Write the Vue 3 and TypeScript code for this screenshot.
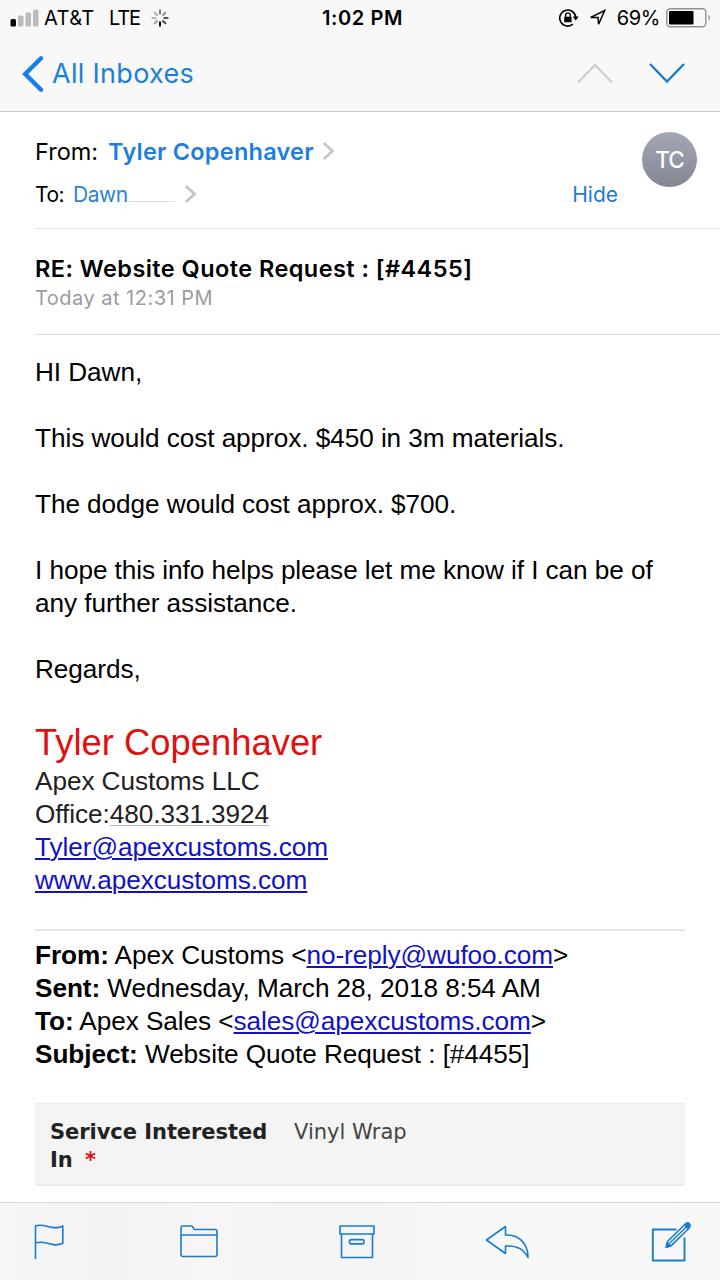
<script setup lang="ts">
interface Line {
  text: string
  cls?: string
}

const paragraphs: Line[] = [
  { text: 'HI Dawn,', cls: 'greeting' },
  { text: 'This would cost approx. $450 in 3m materials.' },
  { text: 'The dodge would cost approx. $700.' },
]

const spokes = [0, 45, 90, 135, 180, 225, 270, 315].map((angle) => ({
  angle,
  shade: ['#777', '#8c8c8c', '#555', '#444', '#000', '#999', '#b5b5b5', '#aaa'][angle / 45],
}))
</script>

<template>
  <div class="screen">
    <header class="top">
      <div class="status">
        <div class="carrier">
          <svg width="29" height="18" viewBox="0 0 29 18">
            <rect x="0.5" y="10" width="5.5" height="7.5" rx="1.5" fill="#000" />
            <rect x="8" y="6.5" width="5.5" height="11" rx="1.5" fill="#bcbcbc" />
            <rect x="15.5" y="3.5" width="5.5" height="14" rx="1.5" fill="#bcbcbc" />
            <rect x="23" y="0.5" width="5.5" height="17" rx="1.5" fill="#bcbcbc" />
          </svg>
          <span class="att">AT&amp;T</span>
          <span class="lte">LTE</span>
          <svg class="spinner" width="18" height="18" viewBox="-9 -9 18 18">
            <line
              v-for="s in spokes"
              :key="s.angle"
              x1="0"
              y1="-4.2"
              x2="0"
              y2="-7.7"
              :stroke="s.shade"
              stroke-width="1.9"
              stroke-linecap="round"
              :transform="`rotate(${s.angle})`"
            />
          </svg>
        </div>
        <div class="clock">1:02 PM</div>
        <div class="power">
          <svg class="lock" width="20" height="18" viewBox="0 0 20 18">
            <path d="M13.9 15.2A8 8 0 1 1 16.7 8" fill="none" stroke="#000" stroke-width="1.6" />
            <path d="M13.7 7.5h6l-3 4z" />
            <rect x="5.2" y="7.7" width="7.4" height="5.6" rx="0.6" />
            <path d="M6.6 8V6.2a2.3 2.3 0 0 1 4.6 0V8" fill="none" stroke="#000" stroke-width="1.4" />
          </svg>
          <svg class="locate" width="18" height="18" viewBox="0 0 18 18">
            <path d="M1.7 8.4L15.7 1.5 9.6 15.3 9 8.5z" fill="none" stroke="#000" stroke-width="1.5" />
          </svg>
          <span class="percent">69%</span>
          <svg class="battery" width="46" height="20" viewBox="0 0 46 20">
            <rect x="0.8" y="0.8" width="39" height="18" rx="3.5" fill="none" stroke="#929292" stroke-width="1.4" />
            <rect x="3" y="3" width="24.5" height="13.5" rx="1" />
            <path d="M42.5 6.5q3 3.3 0 6.6z" fill="#929292" />
          </svg>
        </div>
      </div>
      <nav class="navbar">
        <svg class="back" width="22" height="38" viewBox="0 0 22 38">
          <path d="M19 3.3L3.2 19 19 34.7" fill="none" stroke="#167fe8" stroke-width="4.4" stroke-linecap="round" stroke-linejoin="miter" />
        </svg>
        <span class="inboxes">All Inboxes</span>
        <svg class="up" width="38" height="24" viewBox="0 0 38 24">
          <path d="M2 20.5L19 3l17 17.5" fill="none" stroke="#cdcdcd" stroke-width="2.1" />
        </svg>
        <svg class="down" width="38" height="24" viewBox="0 0 38 24">
          <path d="M2 2L19 19.500 36 2" fill="none" stroke="#187bd3" stroke-width="2.3" />
        </svg>
      </nav>
    </header>

    <section class="people">
      <div class="fields">
        <div class="from">
          <span class="from-label">From:</span>
          <span class="from-name">Tyler Copenhaver</span>
          <svg class="chev" width="13" height="20" viewBox="0 0 13 20">
            <path d="M1.700 2L10.500 10 1.700 18" fill="none" stroke="#c6c6c8" stroke-width="2.800" />
          </svg>
        </div>
        <div class="to">
          <span class="to-label">To:</span>
          <span class="to-name">Dawn</span>
          <span class="redacted"></span>
          <svg class="chev" width="13" height="20" viewBox="0 0 13 20">
            <path d="M1.700 2L10.500 10 1.700 18" fill="none" stroke="#c6c6c8" stroke-width="2.800" />
          </svg>
          <span class="hide">Hide</span>
        </div>
      </div>
      <div class="avatar"><span>TC</span></div>
    </section>

    <section class="subject">
      <div class="title">RE: Website Quote Request : [#4455]</div>
      <div class="date">Today at 12:31 PM</div>
    </section>

    <main class="body">
      <p v-for="p in paragraphs" :key="p.text"><span :class="p.cls">{{ p.text }}</span></p>
      <p><span class="hope">I hope this info helps please let me know if I can be of</span><br /><span>any further assistance.</span></p>
      <p>Regards,</p>
      <div class="signature">
        <div class="sig-name">Tyler Copenhaver</div>
        <div class="dark">Apex Customs LLC</div>
        <div class="dark">Office:<span class="phone">480.331.3924</span></div>
        <div><a class="mail">Tyler@apexcustoms.com</a></div>
        <div><a class="web">www.apexcustoms.com</a></div>
      </div>
      <div class="quoted">
        <div class="q1"><b>From:</b> Apex Customs &lt;<a>no-reply@wufoo.com</a>&gt;</div>
        <div class="q2"><b>Sent:</b> Wednesday, March 28, 2018 8:54 AM</div>
        <div class="q3"><b>To:</b> Apex Sales &lt;<a>sales@apexcustoms.com</a>&gt;</div>
        <div class="q4"><b>Subject:</b> Website Quote Request : [#4455]</div>
      </div>
      <div class="form-row">
        <div class="question"><span class="service">Serivce Interested</span><br />In <i>*</i></div>
        <div class="answer">Vinyl Wrap</div>
      </div>
    </main>

    <footer class="toolbar">
      <svg class="flag" width="32" height="36" viewBox="0 0 32 36">
        <path d="M1.500 35V2C11-1.500 18 7.500 28.800 2v17.200C18 24.500 12 15.500 1.500 19" />
      </svg>
      <svg class="folder" width="38" height="34" viewBox="0 0 38 34">
        <path d="M1 29.500V3q0-2 2-2h8.500q1 0 1.500 1.200l.8 1.600q.4.700 1.200.7h20q2 0 2 2v23q0 2-2 2H3q-2 0-2-2zM1 10h36" />
      </svg>
      <svg class="archive" width="36" height="34" viewBox="0 0 36 34">
        <path d="M1 1h34v8H1zM2.500 9h31v23.500h-31z" />
        <rect x="10.500" y="14.600" width="14.500" height="4.300" rx="2" />
      </svg>
      <svg class="reply" width="46" height="36" viewBox="0 0 46 36">
        <path d="M1.500 16L20.500 2.500V11C33 10.500 43 18.500 43 33.500 38.500 25 32.500 21.500 20.500 22v7.500z" />
      </svg>
      <svg class="compose" width="42" height="42" viewBox="0 0 42 42">
        <path d="M26.500 8.500H2.800v31h31.700V16.500" stroke-width="1.900" />
        <path d="M17.500 20.500L35 3.300 39 7.300 21.500 24.400 16.300 26.300z" stroke-width="1.600" />
        <path d="M19.400 22.500L37 5.300" stroke-width="1.400" />
        <path d="M34.500 4l1.800-1.700q1.500-1 3 .4 1.600 1.700.6 3L38 7.500z" fill="#187bd3" />
        <path d="M16.300 26.300l1.100-4.500 3.300 3z" fill="#187bd3" />
      </svg>
    </footer>
  </div>
</template>

<style>
html,
body {
  margin: 0;
  background: #fff;
}
</style>

<style scoped>
* {
  box-sizing: border-box;
}
.screen {
  width: 720px;
  height: 1280px;
  overflow: hidden;
  display: flex;
  flex-direction: column;
  background: #fff;
  color: #000;
  font-family: Inter, sans-serif;
  white-space: nowrap;
}
svg {
  flex: none;
  display: block;
}
.top {
  height: 112px;
  flex: none;
  background: #f8f8f8;
  border-bottom: 1px solid #c9c9c9;
}
.status {
  height: 36px;
  display: grid;
  grid-template-columns: 1fr auto 1fr;
  align-items: center;
  line-height: 36px;
  font-size: 20px;
}
.carrier {
  display: flex;
  align-items: center;
  padding-left: 10px;
}
.att {
  width: 52px;
  margin-left: 5px;
  letter-spacing: 0.4px;
}
.lte {
  width: 30px;
  margin-left: 13px;
  letter-spacing: -1.1px;
}
.spinner {
  margin-left: 12px;
}
.clock {
  font-weight: 600;
  letter-spacing: 0.6px;
  padding-left: 5px;
}
.power {
  display: flex;
  align-items: center;
  justify-content: flex-end;
  padding-right: 8px;
}
.locate {
  margin-left: 10px;
  margin-right: 10px;
}
.percent {
  letter-spacing: -0.4px;
}
.battery {
  margin-left: 6px;
}
.navbar {
  height: 75px;
  display: flex;
  align-items: center;
  padding-left: 22px;
  padding-right: 34px;
}
.inboxes {
  flex: 1;
  margin-left: 8px;
  color: #1c7fd8;
  font-size: 27px;
  letter-spacing: 0.3px;
}
.down {
  margin-left: 34px;
}
.people {
  height: 117px;
  flex: none;
  margin-left: 35px;
  border-bottom: 1px solid #e2e2e4;
  display: flex;
}
.fields {
  width: 583px;
  padding-top: 21px;
}
.from {
  height: 36px;
  display: flex;
  align-items: center;
  font-size: 23.5px;
}
.from-name {
  margin-left: 10px;
  color: #1c7fe0;
  font-weight: 600;
  letter-spacing: 0.24px;
}
.from .chev {
  margin-left: 8px;
}
.to {
  margin-top: 8px;
  height: 34px;
  display: flex;
  align-items: center;
  font-size: 21px;
}
.to-label {
  letter-spacing: -0.5px;
}
.to-name {
  margin-left: 9px;
  color: #2d83d3;
  letter-spacing: -0.5px;
}
.redacted {
  width: 47px;
  height: 15px;
  border-bottom: 1px solid #e0e0e0;
}
.to .chev {
  margin-left: 9px;
}
.hide {
  margin-left: auto;
  color: #1c7bd0;
}
.avatar {
  margin-left: 24px;
  margin-top: 20px;
  width: 55px;
  height: 55px;
  border-radius: 50%;
  background: linear-gradient(#a2a7b4, #858793);
  color: #fff;
  font-size: 22.5px;
  font-weight: 500;
  letter-spacing: -1px;
  display: flex;
  align-items: center;
  justify-content: center;
}
.subject {
  height: 106px;
  flex: none;
  margin-left: 35px;
  padding-top: 24px;
  border-bottom: 1px solid #dedee0;
}
.title {
  font-size: 23.5px;
  font-weight: 600;
  line-height: 32px;
  letter-spacing: 0.44px;
}
.date {
  font-size: 20px;
  line-height: 26px;
  letter-spacing: 0.48px;
  color: #9b9b9e;
}
.body {
  flex: 1;
  min-height: 0;
  padding: 21px 35px 0;
  font-family: 'Liberation Sans', Arial, sans-serif;
  font-size: 26.2px;
  letter-spacing: -0.07px;
  line-height: 33px;
}
.body p {
  margin: 0 0 33px;
}
.sig-name {
  height: 46px;
  line-height: 47px;
  font-size: 36.4px;
  letter-spacing: 0;
  color: #e01010;
}
.dark {
  color: #222;
}
.phone {
  text-decoration: underline;
  text-decoration-color: #b9b9b9;
  text-decoration-thickness: 1px;
  text-underline-offset: 2px;
}
a {
  color: #1212c4;
  text-decoration: underline;
  text-decoration-thickness: 2px;
  text-underline-offset: 2px;
}
.quoted {
  margin-top: 32px;
  padding-top: 8px;
  border-top: 2px solid #e6e6e6;
}
.form-row {
  margin-top: 32px;
  height: 83px;
  background: #f4f4f4;
  border-top: 1px solid #ebebeb;
  border-bottom: 2px solid #ebebeb;
  padding: 14px 15px 0;
  display: flex;
  font-family: 'DejaVu Sans', Verdana, sans-serif;
  font-size: 21px;
  letter-spacing: 0;
  line-height: 28px;
}
.question {
  width: 244px;
  font-weight: bold;
  color: #222;
}
.service {
  letter-spacing: -0.05px;
}
.question i {
  margin-left: 5px;
  font-style: normal;
  color: #e01010;
}
.answer {
  color: #444;
}
.toolbar {
  height: 78px;
  flex: none;
  background: linear-gradient(90deg, #f6f6f6, #f3f3f3 15%, #f7f5f5 28%, #f4f4f4 50%, #f7f7f7 65%, #f8f8f8);
  border-top: 1px solid #d6d6d6;
  display: flex;
  align-items: center;
  padding: 0 0 0 34px;
}
.toolbar svg {
  fill: none;
  stroke: #187bd3;
  stroke-width: 1.6;
  stroke-linejoin: round;
}
.toolbar .folder {
  margin-left: 114px;
}
.toolbar .archive {
  margin-left: 121px;
}
.toolbar .reply {
  margin-left: 110px;
}
.toolbar .compose {
  margin-left: 119px;
}
</style>
